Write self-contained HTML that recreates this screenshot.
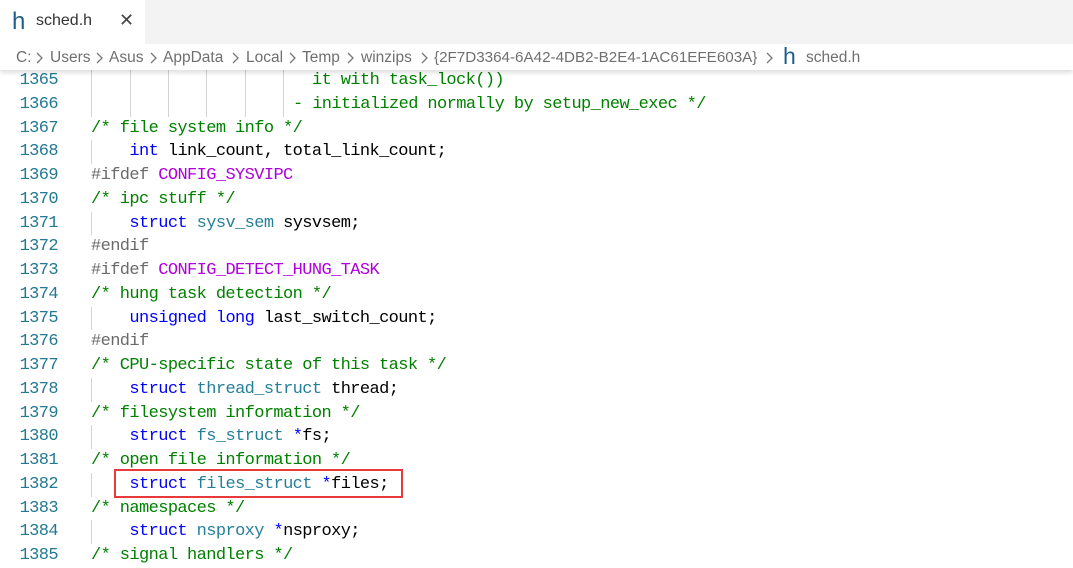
<!DOCTYPE html>
<html><head><meta charset="utf-8"><style>
body{margin:0;width:1073px;height:564px;overflow:hidden;background:#fff;position:relative;font-family:"Liberation Sans",sans-serif}
.tabs{position:absolute;left:0;top:0;width:1073px;height:44px;background:#f3f3f3}
.tab{position:absolute;left:0;top:0;width:145px;height:44px;background:#fff}
.tab .h{position:absolute;left:12px;top:8px;font-size:24px;color:#1f5f8b}
.tab .n{position:absolute;left:36px;top:12px;font-size:16px;color:#333}
.tab .x{position:absolute;left:119px;top:10px;font-size:18px;color:#444}
.bc{position:absolute;left:0;top:44px;width:1073px;height:26px;background:#fff;box-shadow:0 3px 4px rgba(0,0,0,0.12);z-index:2;font-size:15.5px;color:#6f6f6f;white-space:pre;line-height:28px}
.bc span{position:absolute;top:0}
.bc svg{position:absolute;top:8px}
.code{position:absolute;left:0;top:69px;width:1073px}
.l{position:relative;height:23.75px;line-height:23.75px;font-family:"Liberation Mono",monospace;font-size:17px;letter-spacing:-0.6px;white-space:pre}
.ln{position:absolute;left:0;width:58px;text-align:right;color:#237893}
.c{position:absolute;left:91px;color:#000}
.g{position:absolute;top:0;width:1px;height:23.75px;background:#d3d3d3}
.cm{color:#008000}.kw{color:#0000ff}.ty{color:#267f99}.mc{color:#af00db}.pp{color:#6a6a6a}
.box{position:absolute;left:114px;top:469px;width:285px;height:25px;border:2px solid #e8393b;z-index:3}
</style></head><body>
<div class="tabs"><div class="tab"><span class="h">h</span><span class="n">sched.h</span><span class="x">✕</span></div></div>
<div class="bc">
<span style="left:16px">C:</span>
<svg style="left:36px" width="8" height="12"><path d="M1 1l5 5-5 5" fill="none" stroke="#777" stroke-width="1.3"/></svg>
<span style="left:50px">Users</span>
<svg style="left:96px" width="8" height="12"><path d="M1 1l5 5-5 5" fill="none" stroke="#777" stroke-width="1.3"/></svg>
<span style="left:109px">Asus</span>
<svg style="left:150px" width="8" height="12"><path d="M1 1l5 5-5 5" fill="none" stroke="#777" stroke-width="1.3"/></svg>
<span style="left:163px">AppData</span>
<svg style="left:232px" width="8" height="12"><path d="M1 1l5 5-5 5" fill="none" stroke="#777" stroke-width="1.3"/></svg>
<span style="left:246px">Local</span>
<svg style="left:289px" width="8" height="12"><path d="M1 1l5 5-5 5" fill="none" stroke="#777" stroke-width="1.3"/></svg>
<span style="left:302px">Temp</span>
<svg style="left:347px" width="8" height="12"><path d="M1 1l5 5-5 5" fill="none" stroke="#777" stroke-width="1.3"/></svg>
<span style="left:361px">winzips</span>
<svg style="left:421px" width="8" height="12"><path d="M1 1l5 5-5 5" fill="none" stroke="#777" stroke-width="1.3"/></svg>
<span style="left:434px;font-size:15.2px">{2F7D3364-6A42-4DB2-B2E4-1AC61EFE603A}</span>
<svg style="left:766px" width="8" height="12"><path d="M1 1l5 5-5 5" fill="none" stroke="#777" stroke-width="1.3"/></svg>
<span style="left:783px;font-size:23px;color:#1f5f8b;top:-2px">h</span><span style="left:806px">sched.h</span></div>
<div class="code">
<div class="l"><span class="ln">1365</span><span class="g" style="left:91px"></span><span class="g" style="left:130px"></span><span class="g" style="left:168px"></span><span class="g" style="left:206px"></span><span class="g" style="left:245px"></span><span class="g" style="left:283px"></span><span class="c cm" style="left:312px">it with task_lock())</span></div>
<div class="l"><span class="ln">1366</span><span class="g" style="left:91px"></span><span class="g" style="left:130px"></span><span class="g" style="left:168px"></span><span class="g" style="left:206px"></span><span class="g" style="left:245px"></span><span class="g" style="left:283px"></span><span class="c cm" style="left:293px">- initialized normally by setup_new_exec */</span></div>
<div class="l"><span class="ln">1367</span><span class="c cm">/* file system info */</span></div>
<div class="l"><span class="ln">1368</span><span class="g" style="left:91px"></span><span class="c">    <span class="kw">int</span> link_count, total_link_count;</span></div>
<div class="l"><span class="ln">1369</span><span class="c"><span class="pp">#ifdef</span> <span class="mc">CONFIG_SYSVIPC</span></span></div>
<div class="l"><span class="ln">1370</span><span class="c cm">/* ipc stuff */</span></div>
<div class="l"><span class="ln">1371</span><span class="g" style="left:91px"></span><span class="c">    <span class="kw">struct</span> <span class="ty">sysv_sem</span> sysvsem;</span></div>
<div class="l"><span class="ln">1372</span><span class="c pp">#endif</span></div>
<div class="l"><span class="ln">1373</span><span class="c"><span class="pp">#ifdef</span> <span class="mc">CONFIG_DETECT_HUNG_TASK</span></span></div>
<div class="l"><span class="ln">1374</span><span class="c cm">/* hung task detection */</span></div>
<div class="l"><span class="ln">1375</span><span class="g" style="left:91px"></span><span class="c">    <span class="kw">unsigned long</span> last_switch_count;</span></div>
<div class="l"><span class="ln">1376</span><span class="c pp">#endif</span></div>
<div class="l"><span class="ln">1377</span><span class="c cm">/* CPU-specific state of this task */</span></div>
<div class="l"><span class="ln">1378</span><span class="g" style="left:91px"></span><span class="c">    <span class="kw">struct</span> <span class="ty">thread_struct</span> thread;</span></div>
<div class="l"><span class="ln">1379</span><span class="c cm">/* filesystem information */</span></div>
<div class="l"><span class="ln">1380</span><span class="g" style="left:91px"></span><span class="c">    <span class="kw">struct</span> <span class="ty">fs_struct</span> <span class="kw">*</span>fs;</span></div>
<div class="l"><span class="ln">1381</span><span class="c cm">/* open file information */</span></div>
<div class="l"><span class="ln">1382</span><span class="g" style="left:91px"></span><span class="c">    <span class="kw">struct</span> <span class="ty">files_struct</span> <span class="kw">*</span>files;</span></div>
<div class="l"><span class="ln">1383</span><span class="c cm">/* namespaces */</span></div>
<div class="l"><span class="ln">1384</span><span class="g" style="left:91px"></span><span class="c">    <span class="kw">struct</span> <span class="ty">nsproxy</span> <span class="kw">*</span>nsproxy;</span></div>
<div class="l"><span class="ln">1385</span><span class="c cm">/* signal handlers */</span></div>
</div>
<div class="box"></div>
</body></html>
